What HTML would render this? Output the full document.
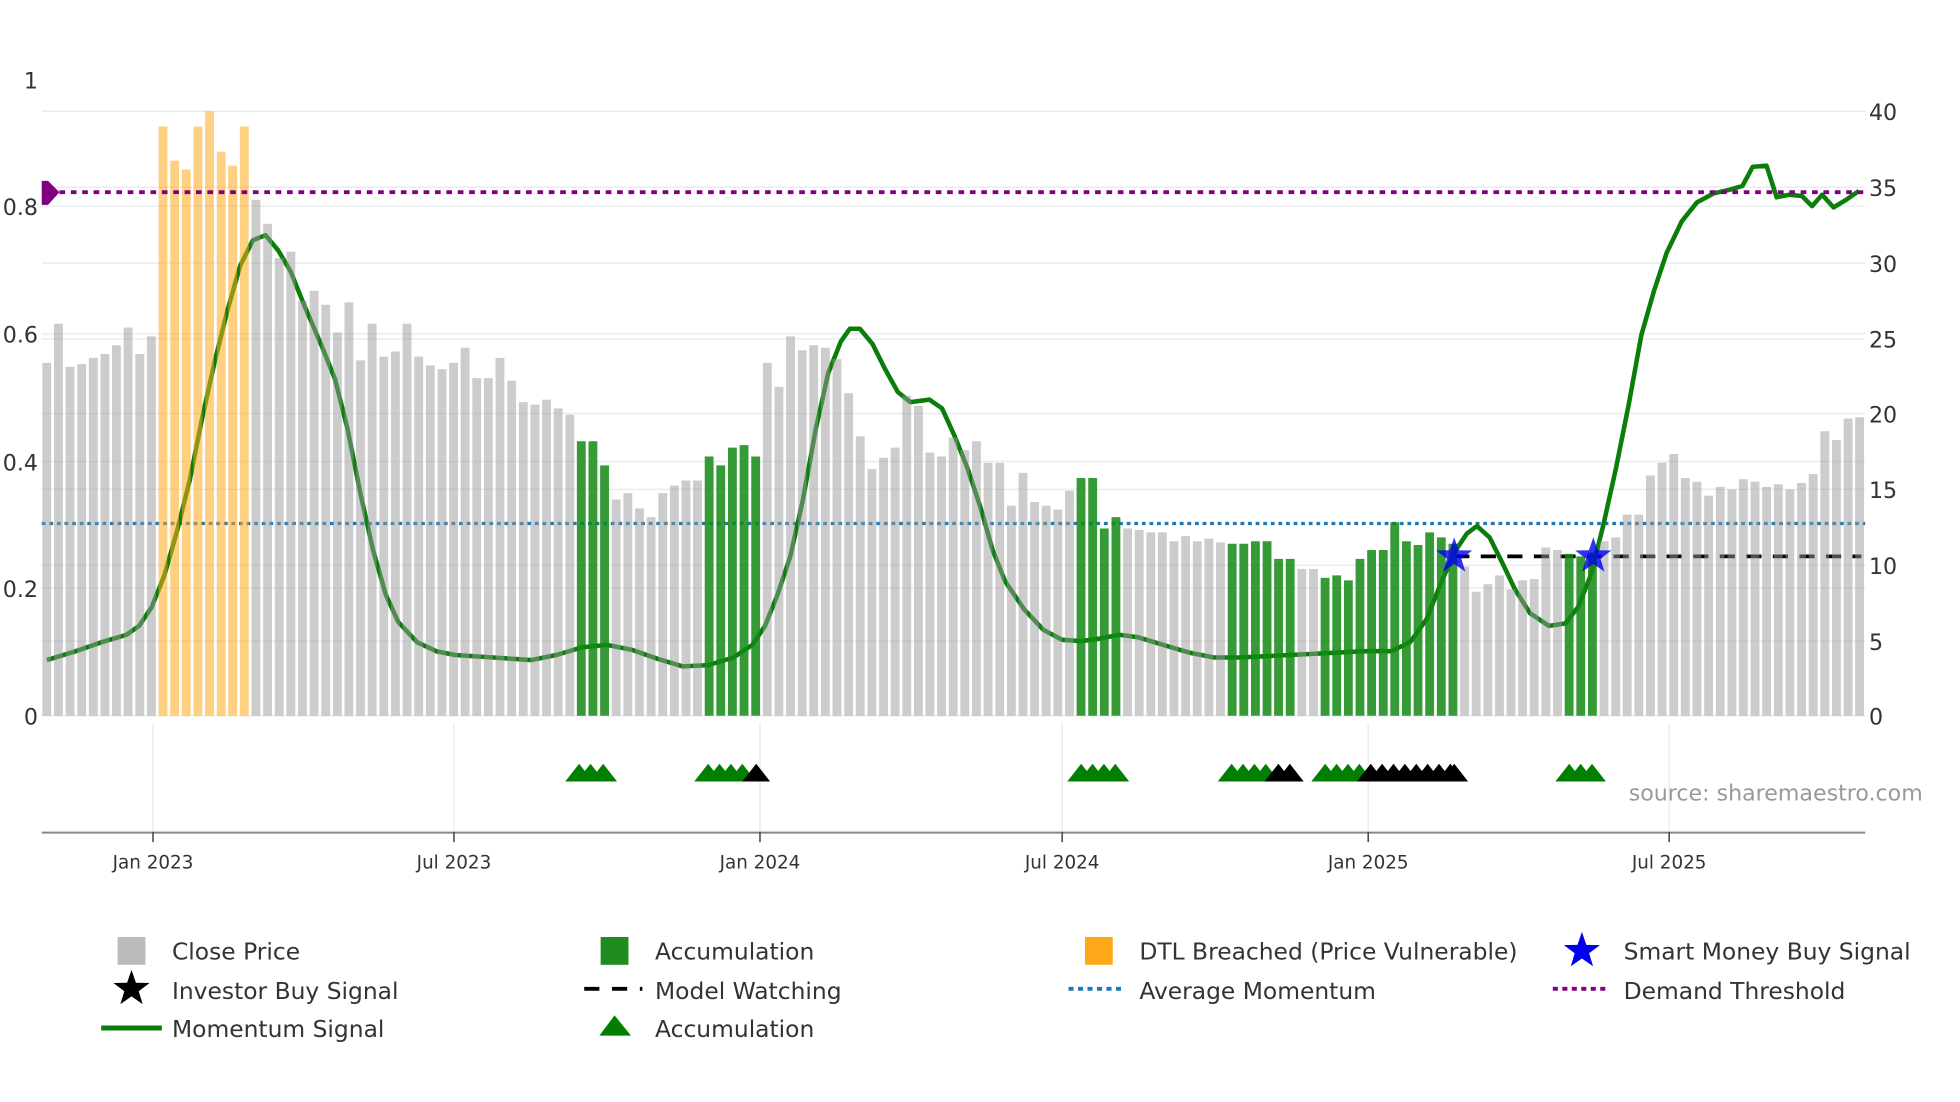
<!DOCTYPE html>
<html><head><meta charset="utf-8"><style>
html,body{margin:0;padding:0;background:#fff;width:1960px;height:1102px;overflow:hidden}
svg{display:block}
text{font-family:"DejaVu Sans","Liberation Sans",sans-serif;fill:#333}
</style></head><body>
<svg width="1960" height="1102" viewBox="0 0 1550 871.5" preserveAspectRatio="none" xmlns="http://www.w3.org/2000/svg">
<rect width="1550" height="871.5" fill="#fff"/>
<!-- grid -->
<g stroke="#e9ecef" stroke-width="1.2">
<line x1="33" x2="1475" y1="88" y2="88"/><line x1="33" x2="1475" y1="148" y2="148"/>
<line x1="33" x2="1475" y1="208" y2="208"/><line x1="33" x2="1475" y1="268" y2="268"/>
<line x1="33" x2="1475" y1="327" y2="327"/><line x1="33" x2="1475" y1="387" y2="387"/>
<line x1="33" x2="1475" y1="447" y2="447"/><line x1="33" x2="1475" y1="507" y2="507"/>
<line x1="33" x2="1475" y1="163" y2="163"/><line x1="33" x2="1475" y1="264" y2="264"/>
<line x1="33" x2="1475" y1="365" y2="365"/><line x1="33" x2="1475" y1="465" y2="465"/>
<line x1="33" x2="1475" y1="566" y2="566"/>
<line x1="121" x2="121" y1="572" y2="658"/><line x1="359" x2="359" y1="572" y2="658"/>
<line x1="601" x2="601" y1="572" y2="658"/><line x1="840" x2="840" y1="572" y2="658"/>
<line x1="1082" x2="1082" y1="572" y2="658"/><line x1="1320" x2="1320" y1="572" y2="658"/>
</g>
<!-- avg momentum -->
<line x1="33" x2="1475" y1="414" y2="414" stroke="#1f77b4" stroke-width="2.5" stroke-dasharray="3,3"/>
<!-- model watching -->
<line x1="1150" x2="1472" y1="440" y2="440" stroke="#000" stroke-width="3" stroke-dasharray="12,9"/>
<!-- momentum (under bars) -->
<path fill="none" stroke="#0a7d0a" stroke-width="3.6" stroke-linejoin="round" d="M37,522 L60,515 L80,508 L100,502 L110,495 L120,480 L130,455 L140,420 L150,380 L160,330 L170,285 L180,245 L190,210 L200,190 L210,186 L220,198 L230,215 L240,240 L255,275 L265,300 L275,340 L285,390 L295,435 L305,470 L315,492 L330,508 L345,515 L360,518 L390,520 L420,522 L440,518 L460,512 L480,510 L500,514 L520,521 L540,527 L560,526 L580,520 L595,510 L605,495 L615,470 L625,440 L635,395 L645,340 L655,295 L665,270 L672,260 L680,260 L690,272 L700,292 L710,310 L720,318 L735,316 L745,323 L755,345 L765,370 L775,400 L785,435 L795,460 L810,482 L825,498 L840,506 L855,507 L870,505 L885,502 L900,504 L920,510 L940,516 L960,520 L980,520 L1040,517 L1080,515 L1100,515 L1115,508 L1128,490 L1140,460 L1150,437 L1160,422 L1168,416 L1178,425 L1188,445 L1198,466 L1210,485 L1225,495 L1238,493 L1248,480 L1258,455 L1268,415 L1278,370 L1288,320 L1298,265 L1308,230 L1318,200 L1330,175 L1342,160 L1355,153 L1368,150 L1378,147 L1386,132 L1397,131 L1405,156 L1415,154 L1425,155 L1433,163 L1441,154 L1450,164 L1460,158 L1470,151"/>
<!-- bars -->
<g stroke-width="7" fill="none">
<path stroke="#999" stroke-opacity="0.5" d="M37,566V287M46.2,566V256M55.4,566V290M64.6,566V288M73.8,566V283M83,566V280M92.1,566V273M101.3,566V259M110.5,566V280M119.7,566V266
M202.4,566V158M211.6,566V177M220.8,566V204M230,566V199M239.2,566V238M248.4,566V230M257.6,566V241M266.8,566V263M275.9,566V239M285.1,566V285M294.3,566V256M303.5,566V282M312.7,566V278M321.9,566V256M331.1,566V282M340.3,566V289M349.5,566V292M358.7,566V287M367.8,566V275M377,566V299M386.2,566V299M395.4,566V283M404.6,566V301M413.8,566V318M423,566V320M432.2,566V316M441.4,566V323M450.6,566V328
M487.3,566V395M496.5,566V390M505.7,566V402M514.9,566V409M524.1,566V390M533.3,566V384M542.5,566V380M551.6,566V380
M606.8,566V287M616,566V306M625.2,566V266M634.4,566V277M643.5,566V273M652.7,566V275M661.9,566V284M671.1,566V311M680.3,566V345M689.5,566V371M698.7,566V362M707.9,566V354M717.1,566V313M726.3,566V321M735.4,566V358M744.6,566V361M753.8,566V346M763,566V356M772.2,566V349M781.4,566V366M790.6,566V366M799.8,566V400M809,566V374M818.2,566V397M827.3,566V400M836.5,566V403M845.7,566V388
M891.7,566V418M900.9,566V419M910.1,566V421M919.2,566V421M928.4,566V428M937.6,566V424M946.8,566V428M956,566V426M965.2,566V429
M1029.5,566V450M1038.7,566V450
M1158.2,566V448M1167.4,566V468M1176.6,566V462M1185.8,566V455M1194.9,566V466M1204.1,566V459M1213.3,566V458M1222.5,566V433M1231.7,566V435
M1268.5,566V428M1277.7,566V425M1286.8,566V407M1296,566V407M1305.2,566V376M1314.4,566V366M1323.6,566V359M1332.8,566V378M1342,566V381M1351.2,566V392M1360.4,566V385M1369.6,566V387M1378.7,566V379M1387.9,566V381M1397.1,566V385M1406.3,566V383M1415.5,566V387M1424.7,566V382M1433.9,566V375M1443.1,566V341M1452.3,566V348M1461.5,566V331M1470.6,566V330"/>
<path stroke="#ffa91a" stroke-opacity="0.55" d="M128.9,566V100M138.1,566V127M147.3,566V134M156.5,566V100M165.7,566V88M174.9,566V120M184,566V131M193.2,566V100"/>
<path stroke="#138a13" stroke-opacity="0.85" d="M459.7,566V349M468.9,566V349M478.1,566V368
M560.8,566V361M570,566V368M579.2,566V354M588.4,566V352M597.6,566V361
M854.9,566V378M864.1,566V378M873.3,566V418M882.5,566V409
M974.4,566V430M983.6,566V430M992.8,566V428M1002,566V428M1011.1,566V442M1020.3,566V442
M1047.9,566V457M1057.1,566V455M1066.3,566V459M1075.5,566V442M1084.7,566V435M1093.9,566V435M1103,566V413M1112.2,566V428M1121.4,566V431M1130.6,566V421M1139.8,566V425M1149,566V430
M1240.9,566V438M1250.1,566V440M1259.3,566V437"/>
</g>
<!-- demand threshold -->
<line x1="38" x2="1475" y1="152" y2="152" stroke="#800080" stroke-width="3" stroke-dasharray="4.5,4.5"/>
<path d="M33,143 L38,143 L47,152 L38,162 L33,162Z" fill="#800080"/>
<!-- stars -->
<g fill="#0000ee" opacity="0.8">
<path transform="translate(1150,440)" d="M0,-15 L3.5,-4.8 L14.3,-4.6 L5.7,1.9 L8.8,12.1 L0,6 L-8.8,12.1 L-5.7,1.9 L-14.3,-4.6 L-3.5,-4.8Z"/>
<path transform="translate(1260,440)" d="M0,-15 L3.5,-4.8 L14.3,-4.6 L5.7,1.9 L8.8,12.1 L0,6 L-8.8,12.1 L-5.7,1.9 L-14.3,-4.6 L-3.5,-4.8Z"/>
</g>
<!-- triangles -->
<g>
<g fill="#007f00">
<path d="M447,618 L458,604 L469,618Z M456,618 L467,604 L478,618Z M466,618 L477,604 L488,618Z"/>
<path d="M549,618 L560,604 L571,618Z M558,618 L569,604 L580,618Z M567,618 L578,604 L589,618Z M576,618 L587,604 L598,618Z"/>
<path d="M844,618 L855,604 L866,618Z M853,618 L864,604 L875,618Z M862,618 L873,604 L884,618Z M871,618 L882,604 L893,618Z"/>
<path d="M963,618 L974,604 L985,618Z M972,618 L983,604 L994,618Z M981,618 L992,604 L1003,618Z M990,618 L1001,604 L1012,618Z"/>
<path d="M1037,618 L1048,604 L1059,618Z M1046,618 L1057,604 L1068,618Z M1055,618 L1066,604 L1077,618Z M1064,618 L1075,604 L1086,618Z"/>
<path d="M1230,618 L1241,604 L1252,618Z M1239,618 L1250,604 L1261,618Z M1248,618 L1259,604 L1270,618Z"/>
</g>
<g fill="#000">
<path d="M587,618 L598,604 L609,618Z"/>
<path d="M1000,618 L1011,604 L1022,618Z M1009,618 L1020,604 L1031,618Z"/>
<path d="M1073,618 L1084,604 L1095,618Z M1082,618 L1093,604 L1104,618Z M1091,618 L1102,604 L1113,618Z M1100,618 L1111,604 L1122,618Z M1109,618 L1120,604 L1131,618Z M1118,618 L1129,604 L1140,618Z M1127,618 L1138,604 L1149,618Z M1136,618 L1147,604 L1158,618Z M1140,618 L1150,604 L1161,618Z"/>
</g>
</g>
<!-- axis -->
<line x1="33" x2="1475" y1="658.5" y2="658.5" stroke="#888" stroke-width="1.6"/>
<g stroke="#444" stroke-width="1.2">
<line x1="121" x2="121" y1="658" y2="666"/><line x1="359" x2="359" y1="658" y2="666"/>
<line x1="601" x2="601" y1="658" y2="666"/><line x1="840" x2="840" y1="658" y2="666"/>
<line x1="1082" x2="1082" y1="658" y2="666"/><line x1="1320" x2="1320" y1="658" y2="666"/>
</g>
<g font-size="14.5" text-anchor="middle">
<text x="121" y="687">Jan 2023</text><text x="359" y="687">Jul 2023</text>
<text x="601" y="687">Jan 2024</text><text x="840" y="687">Jul 2024</text>
<text x="1082" y="687">Jan 2025</text><text x="1320" y="687">Jul 2025</text>
</g>
<g font-size="17.5" text-anchor="end">
<text x="30" y="70">1</text><text x="30" y="170">0.8</text><text x="30" y="271">0.6</text>
<text x="30" y="372">0.4</text><text x="30" y="472">0.2</text><text x="30" y="573">0</text>
</g>
<g font-size="17.5">
<text x="1478" y="95">40</text><text x="1478" y="155">35</text><text x="1478" y="215">30</text>
<text x="1478" y="275">25</text><text x="1478" y="334">20</text><text x="1478" y="394">15</text>
<text x="1478" y="454">10</text><text x="1478" y="514">5</text><text x="1478" y="573">0</text>
</g>
<text x="1288" y="633" font-size="17.5" style="fill:#999">source: sharemaestro.com</text>
<!-- legend -->
<g font-size="18.5">
<rect x="93" y="741" width="22" height="22" fill="#bbb"/>
<text x="136" y="759">Close Price</text>
<path transform="translate(104,782)" d="M0,-15 L3.5,-4.8 L14.3,-4.6 L5.7,1.9 L8.8,12.1 L0,6 L-8.8,12.1 L-5.7,1.9 L-14.3,-4.6 L-3.5,-4.8Z" fill="#000"/>
<text x="136" y="790">Investor Buy Signal</text>
<line x1="80" x2="128" y1="813" y2="813" stroke="#0a7d0a" stroke-width="4"/>
<text x="136" y="820">Momentum Signal</text>

<rect x="475" y="741" width="22" height="22" fill="#1e8c1e"/>
<text x="518" y="759">Accumulation</text>
<line x1="462" x2="508" y1="782" y2="782" stroke="#000" stroke-width="3" stroke-dasharray="12,10"/>
<text x="518" y="790">Model Watching</text>
<path d="M474,819 L486,803 L499,819Z" fill="#007f00"/>
<text x="518" y="820">Accumulation</text>

<rect x="858" y="741" width="22" height="22" fill="#ffa91a"/>
<text x="901" y="759">DTL Breached (Price Vulnerable)</text>
<line x1="845" x2="890" y1="782" y2="782" stroke="#1f77b4" stroke-width="3" stroke-dasharray="4,3.5"/>
<text x="901" y="790">Average Momentum</text>

<path transform="translate(1251,752)" d="M0,-15 L3.5,-4.8 L14.3,-4.6 L5.7,1.9 L8.8,12.1 L0,6 L-8.8,12.1 L-5.7,1.9 L-14.3,-4.6 L-3.5,-4.8Z" fill="#0000ee"/>
<text x="1284" y="759">Smart Money Buy Signal</text>
<line x1="1228" x2="1273" y1="782" y2="782" stroke="#800080" stroke-width="3" stroke-dasharray="4,3.5"/>
<text x="1284" y="790">Demand Threshold</text>
</g>
</svg>
</body></html>
